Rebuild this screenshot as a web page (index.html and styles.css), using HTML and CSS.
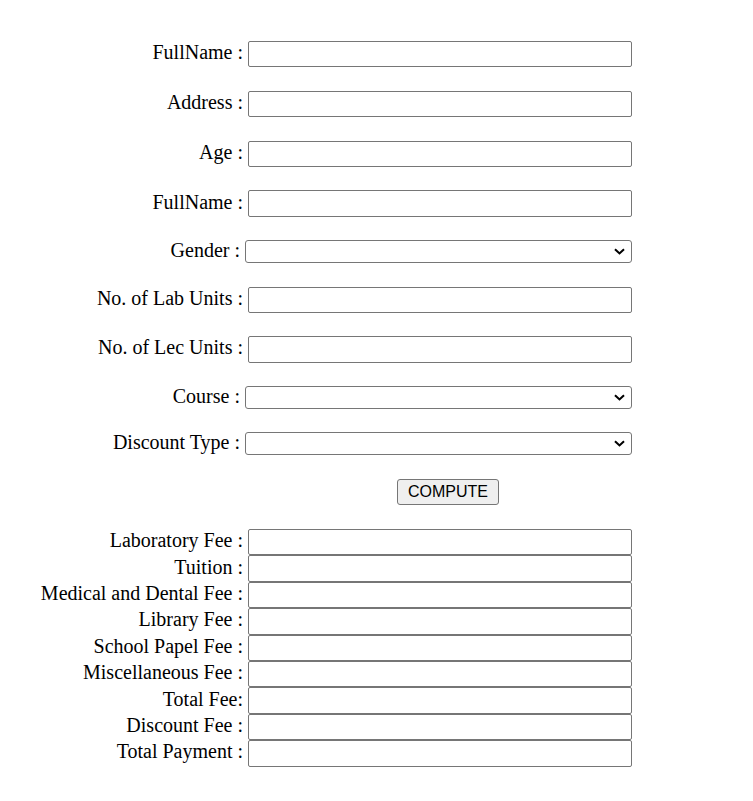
FILE: index.html
```html
<!DOCTYPE html>
<html>
<head>
<meta charset="utf-8">
<title>Enrollment Form</title>
<link rel="stylesheet" href="styles.css">
</head>
<body>
<form class="form">
  <div class="top">
    <div class="row"><label class="lbl">FullName :</label><input class="field" type="text"></div>
    <div class="row"><label class="lbl">Address :</label><input class="field" type="text"></div>
    <div class="row"><label class="lbl">Age :</label><input class="field" type="text"></div>
    <div class="row"><label class="lbl">FullName :</label><input class="field" type="text"></div>
    <div class="row"><label class="lbl">Gender :</label><select class="pick"><option></option></select></div>
    <div class="row"><label class="lbl">No. of Lab Units :</label><input class="field" type="text"></div>
    <div class="row"><label class="lbl">No. of Lec Units :</label><input class="field" type="text"></div>
    <div class="row"><label class="lbl">Course :</label><select class="pick"><option></option></select></div>
    <div class="row"><label class="lbl">Discount Type :</label><select class="pick"><option></option></select></div>
    <div class="btn-row"><button class="btn" type="button">COMPUTE</button></div>
  </div>
  <div class="fees">
    <div class="row"><label class="lbl">Laboratory Fee :</label><input class="field" type="text"></div>
    <div class="row"><label class="lbl">Tuition :</label><input class="field" type="text"></div>
    <div class="row"><label class="lbl">Medical and Dental Fee :</label><input class="field" type="text"></div>
    <div class="row"><label class="lbl">Library Fee :</label><input class="field" type="text"></div>
    <div class="row"><label class="lbl">School Papel Fee :</label><input class="field" type="text"></div>
    <div class="row"><label class="lbl">Miscellaneous Fee :</label><input class="field" type="text"></div>
    <div class="row"><label class="lbl">Total Fee:</label><input class="field" type="text"></div>
    <div class="row"><label class="lbl">Discount Fee :</label><input class="field" type="text"></div>
    <div class="row"><label class="lbl">Total Payment :</label><input class="field" type="text"></div>
  </div>
</form>
</body>
</html>
```

FILE: styles.css
```css
html, body {
  background: #ffffff;
}
body {
  margin: 8px;
  font-family: "Liberation Serif", "Times New Roman", serif;
  font-size: 20px;
  color: #000000;
}
.form {
  width: 624px;
  padding-top: 33px;
  display: flex;
  flex-direction: column;
  gap: 24.2px;
}
.top {
  display: flex;
  flex-direction: column;
  gap: 23.4px;
}
.fees {
  display: flex;
  flex-direction: column;
}
.row {
  display: flex;
  justify-content: flex-end;
  align-items: center;
  gap: 5px;
}
.lbl {
  white-space: nowrap;
  line-height: 18px;
  padding-bottom: 4px;
}
.field {
  box-sizing: border-box;
  width: 384px;
  height: 26.4px;
  margin: 0;
  padding: 1px 2px;
  border: 1px solid #767676;
  border-radius: 2px;
  background: #ffffff;
  font-family: "Liberation Sans", Arial, sans-serif;
  font-size: 13.33px;
}
.pick {
  box-sizing: border-box;
  width: 387px;
  height: 23px;
  margin: 0;
  padding: 0 24px 0 4px;
  -webkit-appearance: none;
  appearance: none;
  font-family: "Liberation Sans", Arial, sans-serif;
  font-size: 13.33px;
  background-color: #ffffff;
  background-image: url("data:image/svg+xml,%3Csvg xmlns='http://www.w3.org/2000/svg' width='11' height='7' viewBox='0 0 11 7'%3E%3Cpath d='M1 1.2 L5.5 5.4 L10 1.2' fill='none' stroke='%23000' stroke-width='2.1'/%3E%3C/svg%3E");
  background-repeat: no-repeat;
  background-position: right 6px center;
  background-size: 11px 7px;
  border: 1px solid #767676;
  border-radius: 3px;
  color: #000000;
}
.btn-row {
  padding-left: 389px;
}
.btn {
  box-sizing: border-box;
  height: 26px;
  width: 102px;
  margin: 0;
  padding: 0;
  font-family: "Liberation Sans", Arial, sans-serif;
  font-size: 16px;
  color: #000000;
  background: #efefef;
  border: 1px solid #767676;
  border-radius: 3px;
}
```
